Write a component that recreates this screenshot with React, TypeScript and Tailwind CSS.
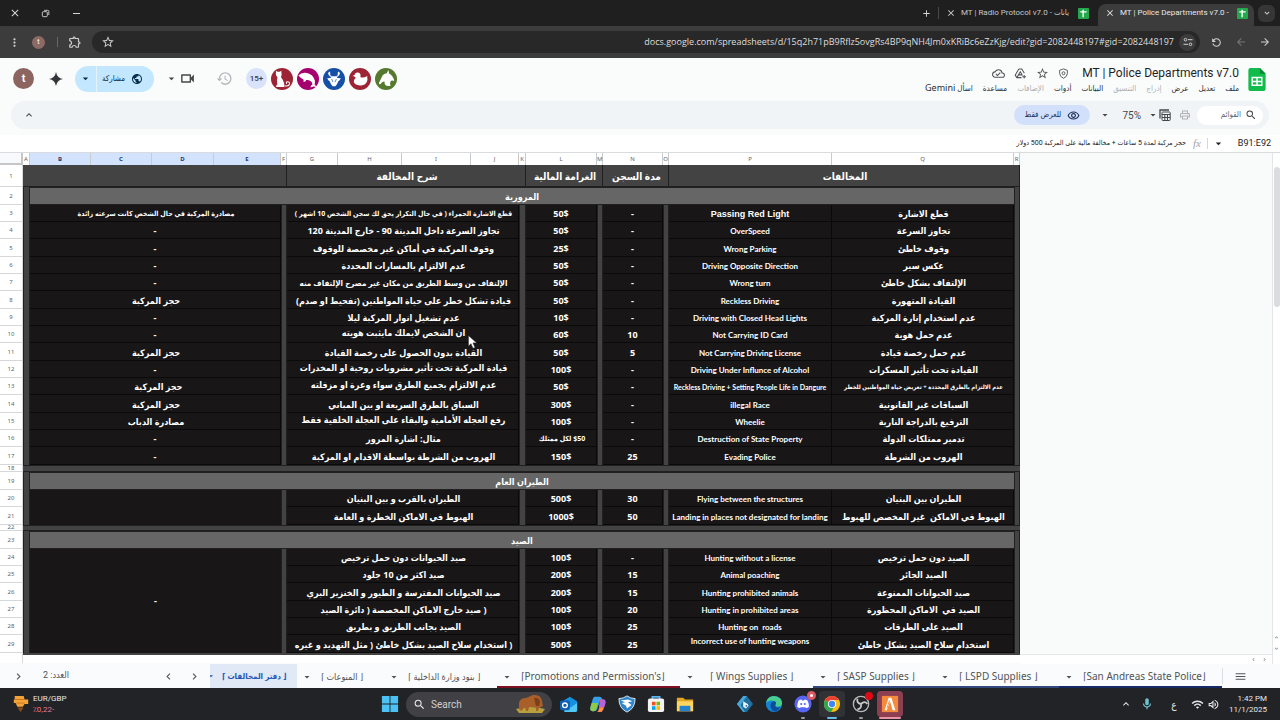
import type { ReactNode } from "react";
import {
  MdAdd,
  MdArrowBack,
  MdArrowDropDown,
  MdArrowForward,
  MdChevronLeft,
  MdChevronRight,
  MdClose,
  MdExpandLess,
  MdExpandMore,
  MdHistory,
  MdMenu,
  MdMoreVert,
  MdOutlineCloudDone,
  MdOutlineExtension,
  MdOutlineMic,
  MdOutlinePrint,
  MdOutlineRemoveRedEye,
  MdOutlineVideocam,
  MdOutlineVolumeUp,
  MdPublic,
  MdRefresh,
  MdSearch,
  MdStarBorder,
  MdWifi,
} from "react-icons/md";

type Row = {
  n: number;
  h: string;
  note?: string;
  desc: string;
  fine: string;
  jail: string;
  en: string;
  ar: string;
  // font size per field where it differs from the default
  size?: Record<string, string>;
  // fields anchored to the top of their cell
  top?: string[];
};

const H17 = "h-[17px]";
const H18 = "h-[18px]";

const TRAFFIC: Row[] = [
  { n: 3, h: H17, note: "مصادرة المركبة في حال الشخص كانت سرعته زائدة", desc: "قطع الاشارة الحمراء ( في حال التكرار يحق لك سجن الشخص 10 اشهر )", fine: "50$", jail: "-", en: "Passing Red Light", ar: "قطع الاشارة", size: { note: "text-[7px]", desc: "text-[7px]", en: "text-[9px]" } },
  { n: 4, h: H17, note: "-", desc: "تجاوز السرعة داخل المدينة 90 - خارج المدينة 120", fine: "50$", jail: "-", en: "OverSpeed", ar: "تجاوز السرعة" },
  { n: 5, h: H18, note: "-", desc: "وقوف المركبة في أماكن غير مخصصة للوقوف", fine: "25$", jail: "-", en: "Wrong Parking", ar: "وقوف خاطئ" },
  { n: 6, h: H17, note: "-", desc: "عدم الالتزام بالمسارات المحددة", fine: "50$", jail: "-", en: "Driving Opposite Direction", ar: "عكس سير" },
  { n: 7, h: H17, note: "-", desc: "الإلتفاف من وسط الطريق من مكان غير مصرح الإلتفاف منه", fine: "50$", jail: "-", en: "Wrong turn", ar: "الإلتفاف بشكل خاطئ", size: { desc: "text-[8px]" } },
  { n: 8, h: H18, note: "حجز المركبة", desc: "قيادة تشكل خطر على حياة المواطنين (تفحيط او صدم)", fine: "50$", jail: "-", en: "Reckless Driving", ar: "القيادة المتهورة" },
  { n: 9, h: H17, note: "-", desc: "عدم تشغيل انوار المركبة ليلا", fine: "10$", jail: "-", en: "Driving with Closed Head Lights", ar: "عدم استخدام إنارة المركبة" },
  { n: 10, h: H17, note: "-", desc: "ان الشخص لايملك مايثبت هويته", fine: "60$", jail: "10", en: "Not Carrying ID Card", ar: "عدم حمل هوية", top: ["desc"] },
  { n: 11, h: H18, note: "حجز المركبة", desc: "القيادة بدون الحصول على رخصة القيادة", fine: "50$", jail: "5", en: "Not Carrying Driving License", ar: "عدم حمل رخصة قيادة" },
  { n: 12, h: H17, note: "-", desc: "قيادة المركبة تحت تأثير مشروبات روحية او المخدرات", fine: "100$", jail: "-", en: "Driving Under Influnce of Alcohol", ar: "القيادة تحت تأثير المسكرات", top: ["desc"] },
  { n: 13, h: H17, note: "حجز المركبة  ", desc: "عدم الالتزام بجميع الطرق سواء وعرة او مزفلته", fine: "50$", jail: "-", en: "Reckless Driving + Setting People Life in Dangure", ar: "عدم الالتزام بالطرق المحددة + تعريض حياة المواطنين للخطر", size: { en: "text-[7px]", ar: "text-[6px]" }, top: ["desc"] },
  { n: 14, h: H18, note: "حجز المركبة", desc: "السباق بالطرق السريعة او بين المباني", fine: "300$", jail: "-", en: "illegal Race", ar: "السباقات غير القانونية" },
  { n: 15, h: H17, note: "مصادرة الدباب", desc: "رفع العجله الأمامية والبقاء على العجلة الخلفية فقط", fine: "100$", jail: "-", en: "Wheelie", ar: "الترفيع بالدراجة النارية", top: ["desc"] },
  { n: 16, h: H17, note: "-", desc: "مثال: اشارة المرور", fine: "$50 لكل ممتلك", jail: "-", en: "Destruction of State Property", ar: "تدمير ممتلكات الدولة", size: { fine: "text-[7px]" } },
  { n: 17, h: H18, note: "-", desc: "الهروب من الشرطة بواسطة الاقدام او المركبة", fine: "150$", jail: "25", en: "Evading Police", ar: "الهروب من الشرطة" },
];

const AVIATION: Row[] = [
  { n: 20, h: H17, desc: "الطيران بالقرب و بين البنيان", fine: "500$", jail: "30", en: "Flying between the structures", ar: "الطيران بين البنيان" },
  { n: 21, h: H18, desc: "الهبوط في الاماكن الخطرة و العامة", fine: "1000$", jail: "50", en: "Landing in places not designated for landing", ar: "الهبوط في الاماكن  غير المخصص للهبوط" },
];

const HUNTING: Row[] = [
  { n: 24, h: H17, desc: "صيد الحيوانات دون حمل ترخيص", fine: "100$", jail: "-", en: "Hunting without a license", ar: "الصيد دون حمل ترخيص" },
  { n: 25, h: H17, desc: "صيد اكثر من 10 جلود", fine: "200$", jail: "15", en: "Animal poaching", ar: "الصيد الجائر" },
  { n: 26, h: H18, desc: "صيد الحيوانات المفترسة و الطيور و الخنزير البري", fine: "200$", jail: "15", en: "Hunting prohibited animals", ar: "صيد الحيوانات الممنوعة" },
  { n: 27, h: H17, desc: "( صيد خارج الاماكن المخصصة ( دائرة الصيد", fine: "100$", jail: "20", en: "Hunting in prohibited areas", ar: "الصيد في  الاماكن المحظورة" },
  { n: 28, h: H17, desc: "الصيد بجانب الطريق و بطريق", fine: "100$", jail: "25", en: "Hunting on  roads", ar: "الصيد على الطرقات" },
  { n: 29, h: H18, desc: "( استخدام سلاح الصيد بشكل خاطئ ( مثل التهديد و غيره", fine: "500$", jail: "25", en: "Incorrect use of hunting weapons", ar: "استخدام سلاح الصيد بشكل خاطئ", top: ["en"] },
];

const COLUMNS = [
  { id: "A", w: "w-[7px]" },
  { id: "B", w: "w-[61px]" },
  { id: "C", w: "w-[61px]" },
  { id: "D", w: "w-[62px]" },
  { id: "E", w: "w-[67px]" },
  { id: "F", w: "w-[6px]" },
  { id: "G", w: "w-[51px]" },
  { id: "H", w: "w-[64px]" },
  { id: "I", w: "w-[69px]" },
  { id: "J", w: "w-[48px]" },
  { id: "K", w: "w-[7px]" },
  { id: "L", w: "w-[71px]" },
  { id: "M", w: "w-[6px]" },
  { id: "N", w: "w-[60px]" },
  { id: "O", w: "w-[6px]" },
  { id: "P", w: "w-[163px]" },
  { id: "Q", w: "w-[182px]" },
  { id: "R", w: "w-[6px]" },
];

const SELECTED = ["B", "C", "D", "E"];

const AR = "font-['Noto_Sans','DejaVu_Sans_Condensed','DejaVu_Sans',sans-serif]";

function RowNumber({ n }: { n: number }) {
  return (
    <th className="border-r border-b border-[#d5d7da] bg-white p-0 text-[6px] leading-none font-normal text-[#5f6368]">
      {n}
    </th>
  );
}

function Stripe() {
  return <td className="border-x border-[#202020] bg-[#434343] p-0" />;
}

function Cell({
  children,
  span = 1,
  size = "text-[9px]",
  top,
  font = "",
}: {
  children?: ReactNode;
  span?: number;
  size?: string;
  top?: boolean;
  font?: string;
}) {
  return (
    <td
      colSpan={span}
      dir="auto"
      className={`border-r border-b border-[#0a0a0a] bg-[#181617] px-0 pb-0 text-center font-bold whitespace-pre text-white ${size} ${font} ${
        top ? "pt-0 align-top leading-[13px]" : "pt-[2px] align-middle leading-[14px]"
      }`}
    >
      {children}
    </td>
  );
}

function SheetRow({ row, note }: { row: Row; note?: ReactNode }) {
  const top = (key: string) => row.top?.includes(key);
  // the first row is set in Arial, the others in a narrower face
  const latin = row.n === 3 ? "font-['Liberation_Sans',sans-serif]" : "font-['Lato',sans-serif]";
  return (
    <tr className={row.h}>
      <RowNumber n={row.n} />
      <Stripe />
      {note !== undefined ? (
        note
      ) : (
        <Cell span={4} size={row.size?.note}>
          {row.note}
        </Cell>
      )}
      <Stripe />
      <Cell span={4} size={row.size?.desc} top={top("desc")}>
        {row.desc}
      </Cell>
      <Stripe />
      <Cell size={row.size?.fine}>{row.fine}</Cell>
      <Stripe />
      <Cell>{row.jail}</Cell>
      <Stripe />
      <Cell size={row.size?.en ?? "text-[8px]"} top={top("en")} font={latin}>
        {row.en}
      </Cell>
      <Cell size={row.size?.ar}>{row.ar}</Cell>
      <Stripe />
    </tr>
  );
}

function SectionRow({ n, title, h }: { n: number; title: string; h: string }) {
  return (
    <tr className={h}>
      <RowNumber n={n} />
      <Stripe />
      <td
        colSpan={16}
        dir="rtl"
        className="border-y border-[#202020] bg-[#666666] p-0 text-center text-[9px] leading-[15px] font-bold text-white"
      >
        {title}
      </td>
      <Stripe />
    </tr>
  );
}

function GapRow({ n, h }: { n: number; h: string }) {
  return (
    <tr className={h}>
      <th className="border-r border-b border-[#d5d7da] bg-white p-0 text-[6px] leading-[5px] font-normal text-[#5f6368]">{n}</th>
      <td colSpan={18} className="border-y border-[#202020] bg-[#434343] p-0" />
    </tr>
  );
}

function Sheet() {
  const head = "border-r border-b border-[#202020] bg-[#434343] p-0 text-center text-[10px] leading-[18px] font-bold text-white";
  return (
    <table className={`w-[1020px] table-fixed border-separate border-spacing-0 self-start ${AR}`}>
      <colgroup>
        <col className="w-[23px]" />
        {COLUMNS.map((c) => (
          <col key={c.id} className={c.w} />
        ))}
      </colgroup>
      <thead>
        <tr className="h-[12px]">
          <th className="border-r-2 border-b-2 border-[#c4c7c5] bg-[#f8f9fa] p-0" />
          {COLUMNS.map((c) => (
            <th
              key={c.id}
              className={`border-r border-[#c9cccf] p-0 text-center text-[6px] leading-[10px] ${
                SELECTED.includes(c.id) ? "bg-[#d3e3fd] font-bold text-[#1f3a6b]" : "bg-white font-normal text-[#5f6368]"
              }`}
            >
              {c.id}
            </th>
          ))}
        </tr>
      </thead>
      <tbody>
        <tr className="h-[22px]">
          <RowNumber n={1} />
          <td colSpan={6} className={head} />
          <td colSpan={5} dir="rtl" className={head}>شرح المخالفة</td>
          <td colSpan={2} dir="rtl" className={head}>الغرامة المالية</td>
          <td colSpan={2} dir="rtl" className={head}>مدة السجن</td>
          <td colSpan={3} dir="rtl" className={head}>المخالفات</td>
        </tr>
        <SectionRow n={2} title="المرورية" h={H18} />
        {TRAFFIC.map((row) => (
          <SheetRow key={row.n} row={row} />
        ))}
        <GapRow n={18} h="h-[7px]" />
        <SectionRow n={19} title="الطيران العام" h={H18} />
        {AVIATION.map((row, i) => (
          <SheetRow
            key={row.n}
            row={row}
            note={i === 0 ? <td colSpan={4} rowSpan={2} className="bg-[#181617] p-0" /> : null}
          />
        ))}
        <GapRow n={22} h="h-[6px]" />
        <SectionRow n={23} title="الصيد" h={H18} />
        {HUNTING.map((row, i) => (
          <SheetRow
            key={row.n}
            row={row}
            note={
              i === 0 ? (
                <td colSpan={4} rowSpan={6} className="bg-[#181617] p-0 text-center text-[9px] font-bold text-white">-</td>
              ) : null
            }
          />
        ))}
        <tr className="h-[10px]">
          <td className="border-r border-[#d5d7da] bg-white p-0" />
          <td colSpan={18} className="border-t-2 border-[#434343] bg-white p-0" />
        </tr>
      </tbody>
    </table>
  );
}

function SheetsIcon() {
  return (
    <svg viewBox="0 0 12 12" className="size-[11px] shrink-0">
      <rect width="12" height="12" rx="1" fill="#23a84c" />
      <path d="M2.5 4.2h7M5.6 2v8" stroke="#fff" strokeWidth="1.5" />
    </svg>
  );
}

function BrowserTabs() {
  return (
    <div className="flex h-[26px] items-center bg-[#1f1f1f] text-[#d6d6d6]">
      <button aria-label="Close window" className="flex w-[29px] justify-center"><MdClose size={12} /></button>
      <button aria-label="Restore window" className="flex w-[32px] justify-center">
        <svg viewBox="0 0 10 10" className="size-[9px]" fill="none" stroke="currentColor">
          <rect x="1.500" y="3" width="5.500" height="5.500" rx="1" />
          <path d="M3.500 1.500h4q1.200 0 1.200 1.200v4" />
        </svg>
      </button>
      <button aria-label="Minimize window" className="flex w-[30px] justify-center"><span className="h-px w-[7px] bg-[#d6d6d6]" /></button>
      <div className="flex-1" />
      <button aria-label="New tab" className="flex w-[24px] justify-center"><MdAdd size={11} /></button>
      <div className="h-3 w-px bg-[#4a4a4a]" />
      <div className="flex h-full w-[159px] items-center pl-[7px]">
        <button aria-label="Close tab" className="mr-[5px]"><MdClose size={10} /></button>
        <span dir="ltr" className="w-[112px] text-[8px] whitespace-nowrap text-[#c7c7c7]">MT | Radio Protocol v7.0 - يانات</span>
        <span className="ml-[5px]"><SheetsIcon /></span>
      </div>
      <div className="mt-1 flex h-[22px] w-[156px] items-center rounded-t-lg bg-[#3c3c3c] pb-1 pl-[7px] text-[#e8e8e8]">
        <button aria-label="Close tab" className="mr-[5px]"><MdClose size={10} /></button>
        <span className="w-[112px] text-[8px] whitespace-nowrap">MT | Police Departments v7.0 -</span>
        <span className="ml-[5px]"><SheetsIcon /></span>
      </div>
      <button aria-label="Search tabs" className="mr-[5px] ml-1 flex size-[17px] items-center justify-center rounded-md bg-[#363636]">
        <MdExpandMore size={10} />
      </button>
    </div>
  );
}

function AddressBar() {
  return (
    <div className="flex h-[32px] items-center bg-[#3c3c3c] text-[#d0d0d0]">
      <button aria-label="Browser menu" className="flex w-[29px] justify-center"><MdMoreVert size={13} /></button>
      <button className="ml-[3px] size-[13px] rounded-full bg-[#8d6a66] text-[7px] leading-[13px] text-white">t</button>
      <div className="ml-[12px] h-[10px] w-px bg-[#666]" />
      <button aria-label="Extensions" className="ml-[10px]"><MdOutlineExtension size={14} /></button>
      <div className="ml-[10px] flex h-[22px] flex-1 items-center rounded-full bg-[#282828] pr-1 pl-[9px]">
        <button aria-label="Bookmark"><MdStarBorder size={14} /></button>
        <input
          aria-label="Address"
          readOnly
          className="min-w-0 flex-1 bg-transparent pr-[5px] text-right font-['Open_Sans','Liberation_Sans',sans-serif] text-[9px] text-[#dedede] outline-none"
          value="docs.google.com/spreadsheets/d/15q2h71pB9Rflz5ovgRs4BP9qNH4Jm0xKRiBc6eZzKjg/edit?gid=2082448197#gid=2082448197"
        />
        <button aria-label="Site settings" className="flex size-[17px] items-center justify-center rounded-full bg-[#3c3c3c]">
          <svg viewBox="0 0 10 10" className="size-[10px]" fill="none" stroke="currentColor">
            <circle cx="2.500" cy="2.700" r="1.300" />
            <circle cx="7.500" cy="7.300" r="1.300" />
            <path d="M5 2.700h4.500M.5 7.300H5" />
          </svg>
        </button>
      </div>
      <button aria-label="Reload" className="ml-[10px]"><MdRefresh size={13} className="-scale-x-100" /></button>
      <button aria-label="Forward" className="ml-[12px] text-[#777]"><MdArrowBack size={12} /></button>
      <button aria-label="Back" className="mr-[9px] ml-[12px]"><MdArrowForward size={12} /></button>
    </div>
  );
}

const ANIMALS = [
  {
    name: "Anonymous Cat",
    bg: "fill-[#9c2435]",
    art: (
      <>
        <path d="M-17-24l4 3h6l5-3 1 12q-3 5-1 8 6 6 8 16l1 6q2 4-1 5h-22q-3-2 0-5 4-2 2-6-2-10 1-17-5-4-5-10z" fill="#fff" />
        <path d="M9 20q11 2 13-6 0-7-7-6-4 2-1 6" fill="none" stroke="#fff" strokeWidth="3" />
      </>
    ),
  },
  {
    name: "Anonymous Dolphin",
    bg: "fill-[#a6006f]",
    art: <path d="M-28-10q8-9 20-8 22 2 28 22 1 8-1 12 5 3 4 8-4-3-8-2-4 3-8 2 1-6 6-8 0-8-8-12-6-2-10-1-2 6-8 6 1-5-1-8-8-4-14-11z" fill="#fff" />,
  },
  {
    name: "Anonymous Kraken",
    bg: "fill-[#174ea6]",
    art: (
      <>
        <path d="M-20-2l10-1 3-5H7l3 5 10 1-5 7-3 2q-2 8-8 14h-8q-6-6-8-14l-3-2z" fill="#fff" />
        <path d="M-7-7q-8-2-9-12M-12-12l-1-9M7-7q8-2 9-12M12-12l1-9" fill="none" stroke="#fff" strokeWidth="3" />
        <path d="M-7 0L-3 9M7 0L3 9" fill="none" stroke="#174ea6" strokeWidth="2" />
      </>
    ),
  },
  {
    name: "Anonymous Duck",
    bg: "fill-[#9c2435]",
    art: <path d="M-22-9l6-3q2-8 10-7 10 2 7 13 8 5 20-3 4 24-14 27-20 3-25-9-1-8 6-13-4-1-5-4z" fill="#fff" />,
  },
  {
    name: "Anonymous Horse",
    bg: "fill-[#567a2d]",
    art: <path d="M-20 10l10-20q4-6 12-7l5-9 2 10q12 6 15 22-6-3-10 0-4 4-1 14-12 2-16-4-2-5-1-9-5 0-9 4-2 5-6 4-3-1-1-5z" fill="#fff" />,
  },
];

function DocHeader() {
  return (
    <header className="flex h-[43px] items-center bg-[#fafcfc] pb-[2px] text-[#444746]">
      <button aria-label="Account" className="ml-[13px] size-[21px] rounded-full bg-[#8d6560] text-[11px] leading-[20px] font-bold text-white">t</button>
      <button aria-label="Gemini" className="ml-[15px]">
        <svg viewBox="0 0 14 14" className="size-[14px]"><path d="M7 0q1 6 7 7-6 1-7 7-1-6-7-7 6-1 7-7z" fill="#333638" /></svg>
      </button>
      <div className="ml-[12px] flex h-[26px] w-[79px] items-center rounded-full bg-[#c2e7ff] text-[#062e4b]">
        <button aria-label="Share options" className="flex h-full w-[22px] items-center justify-center border-r border-[#e3f3ff]"><MdArrowDropDown size={13} /></button>
        <button className="flex flex-1 items-center justify-center gap-[6px] pr-[6px] text-[8px]"><span dir="rtl">مشاركة</span><MdPublic size={12} /></button>
      </div>
      <button className="ml-[11px] flex items-center"><MdArrowDropDown size={13} /><MdOutlineVideocam size={17} className="ml-[1px]" /></button>
      <button aria-label="Version history" className="ml-[20px] text-[#b4b8bb]"><MdHistory size={17} /></button>
      <div className="ml-[13px] flex items-center gap-[4px]">
        <span className="size-[21px] rounded-full bg-[#d8e2fb] text-center text-[8px] leading-[21px] font-medium text-[#333c55]">15+</span>
        {ANIMALS.map((a) => (
          <svg key={a.name} viewBox="-32 -32 64 64" className="size-[22px]" role="img" aria-label={a.name}>
            <circle r="32" className={a.bg} />
            {a.art}
          </svg>
        ))}
      </div>
      <div className="flex-1" />
      <div className="flex flex-col items-end pt-[3px]">
        <div className="flex items-center gap-[9px] text-[#505355]">
          <MdOutlineCloudDone size={13} />
          <svg viewBox="0 0 14 12" className="h-[11px] w-[13px]" fill="none" stroke="currentColor" strokeWidth="1.100">
            <path d="M5.200 1h3.200l2.800 4.800M8 10.500H3L1.200 7.800 5.200 1M3 10.500L6.800 4l2 3.500H5" />
            <path d="M11 7.500v4M9 9.500h4" />
          </svg>
          <MdStarBorder size={13} />
          <svg viewBox="0 0 12 12" className="size-[11px]" fill="none" stroke="currentColor">
            <path d="M6 1l4.200 1.500v3.700q-.3 3.400-4.200 5-3.900-1.600-4.200-5V2.500z" />
            <circle cx="6" cy="5.700" r="1.600" />
          </svg>
          <h1 className="ml-[4px] text-[12px] leading-[16px] text-[#1f1f1f]">MT | Police Departments v7.0</h1>
        </div>
        <nav dir="rtl" className={`flex gap-[10px] text-[8px] leading-[14px] text-[#2c2e30] ${AR}`}>
          <button>ملف</button>
          <button>تعديل</button>
          <button>عرض</button>
          <button className="text-[#adb0b3]">إدراج</button>
          <button className="text-[#adb0b3]">التنسيق</button>
          <button>البيانات</button>
          <button>أدوات</button>
          <button className="text-[#adb0b3]">الإضافات</button>
          <button>مساعدة</button>
          <button>اسأل <span className="text-[9px]">Gemini</span></button>
        </nav>
      </div>
      <svg viewBox="0 0 18 24" className="mr-[14px] ml-[9px] mt-[2px] h-[23px] w-[18px]">
        <path d="M2 0h10l6 6v16q0 2-2 2H2q-2 0-2-2V2q0-2 2-2z" fill="#11bc4b" />
        <path d="M12 0l6 6h-6z" fill="#0a8838" />
        <path d="M4 10h10v8H4zM4 14h10M9 10v8" fill="none" stroke="#fff" strokeWidth="1.500" />
      </svg>
    </header>
  );
}

function Toolbar() {
  return (
    <div className="bg-[#fafcfc] px-[11px] pb-[6px]">
      <div className="flex h-[28px] items-center rounded-full bg-[#f0f4f7] text-[#444746]">
        <button aria-label="Hide menus" className="ml-[12px]"><MdExpandLess size={12} /></button>
        <div className="flex-1" />
        <button className="flex h-[20px] w-[76px] items-center justify-center gap-[6px] rounded-full bg-[#d3e0fb] text-[8px] text-[#1b3055]">
          <span dir="rtl">للعرض فقط</span>
          <MdOutlineRemoveRedEye size={13} />
        </button>
        <button className="ml-[9px] flex items-center text-[10px]"><MdArrowDropDown size={12} className="mr-[11px]" />75%</button>
        <button aria-label="Filter views" className="ml-[6px] flex items-center">
          <MdArrowDropDown size={12} />
          <svg viewBox="0 0 12 12" className="size-[12px]" fill="none" stroke="currentColor">
            <path d="M1 9.500V1h9" strokeWidth="1.300" />
            <rect x="3" y="3" width="8.200" height="8.500" rx=".8" />
            <path d="M3 5.500h8.200M3 8.500h8.200M5.800 5.500v6M8.500 5.500v6" />
          </svg>
        </button>
        <button aria-label="Print" className="ml-[8px] text-[#b0b4b7]"><MdOutlinePrint size={12} /></button>
        <label className="mr-[6px] ml-[6px] flex h-[19px] w-[66px] items-center rounded-full bg-white pr-[6px]">
          <input dir="rtl" aria-label="القوائم" placeholder="القوائم" className="w-[44px] bg-transparent text-[8px] outline-none placeholder:text-[#62666a]" />
          <MdSearch size={12} className="ml-auto" />
        </label>
      </div>
    </div>
  );
}

function FormulaBar() {
  return (
    <div className="flex h-[18px] items-center justify-end border-b border-[#d9dcdf] bg-white pr-[9px] text-[#202124]">
      <span dir="rtl" className="text-[7px]">حجز مركبة لمدة 5 ساعات + مخالفة مالية على المركبة 500 دولار</span>
      <span className="ml-[7px] font-['Liberation_Serif',serif] text-[11px] text-[#a0a4a8] italic">fx</span>
      <div className="ml-[6px] h-[11px] w-px bg-[#d5d8db]" />
      <MdArrowDropDown size={13} className="ml-[4px]" />
      <span className="ml-[13px] text-[9px]">B91:E92</span>
    </div>
  );
}

const SHEET_TABS = [
  { label: "⌈ المنوعات ⌋", w: "w-[87px]", line: "border-transparent", style: "gap-[8px] text-[9px]" },
  { label: "⌈ بنود وزارة الداخلية ⌋", w: "w-[113px]", line: "border-transparent", style: "gap-[8px] text-[9px]" },
  { label: "⌈Promotions and Permission's⌋", w: "w-[183px]", line: "border-[#7d1022]", style: "gap-[8px] text-[10px]" },
  { label: "⌈ Wings Supplies ⌋", w: "w-[133px]", line: "border-transparent", style: "gap-[14px] text-[10px]" },
  { label: "⌈ SASP Supplies ⌋", w: "w-[122px]", line: "border-[#33487c]", style: "gap-[8px] text-[10px]" },
  { label: "⌈ LSPD Supplies ⌋", w: "w-[124px]", line: "border-[#33487c]", style: "gap-[8px] text-[10px]" },
  { label: "⌈San Andreas State Police⌋", w: "w-[163px]", line: "border-[#162a63]", style: "gap-[8px] text-[10px]" },
];

function SheetTabs() {
  return (
    <div className="flex h-[24px] items-center bg-[#fafbfc] text-[#505458]">
      <button aria-label="Side panel" className="flex w-[36px] justify-center"><MdChevronRight size={13} /></button>
      <span dir="rtl" className="w-[40px] text-center text-[9px]">العدد: 2</span>
      <div className="w-[86px]" />
      <button aria-label="Scroll tabs left" className="w-[26px]"><MdChevronLeft size={13} /></button>
      <button aria-label="Scroll tabs right" className="w-[22px]"><MdChevronRight size={13} /></button>
      <button className={`flex h-full w-[87px] items-center gap-[6px] overflow-hidden bg-[#e1e9f7] text-[8px] font-bold whitespace-nowrap text-[#2557b5] ${AR}`}>
        <MdArrowDropDown size={10} className="-ml-[4px] shrink-0" />
        ⌈ دفتر المخالفات ⌋
      </button>
      {SHEET_TABS.map((t) => (
        <button key={t.label} className={`flex h-full items-center border-b-2 pt-[3px] pl-[4px] whitespace-nowrap ${t.w} ${t.line} ${t.style} ${AR}`}>
          <MdArrowDropDown size={12} className="shrink-0" />
          {t.label}
        </button>
      ))}
      <div className="h-[16px] w-px bg-[#dcdfe2]" />
      <div className="flex-1" />
      <button aria-label="All sheets" className="mr-[33px]"><MdMenu size={13} /></button>
    </div>
  );
}

function TaskIcon({ label, children, active }: { label: string; children: ReactNode; active?: string }) {
  return (
    <button aria-label={label} className={`flex size-[26px] shrink-0 flex-col items-center justify-center rounded ${active ?? ""}`}>
      <svg viewBox="0 0 20 20" className="size-[18px]">{children}</svg>
    </button>
  );
}

function Taskbar() {
  return (
    <footer className="flex h-[32px] items-center bg-[#222326] text-[#e8e8e8]">
      <svg viewBox="0 0 18 20" className="ml-[12px] size-[18px]">
        <path d="M2 1h10l1 4h4v5h-4l-2 3H5L3 9H1V5h1z" fill="#f2a33a" />
        <path d="M2 5h11M4 9h9" stroke="#c9741b" />
        <path d="M5 14h7l-3.500 5z" fill="#8a4a1c" />
      </svg>
      <div className="ml-[3px] w-[60px] text-[8px] leading-[11px]">
        <div>EUR/GBP</div>
        <div className="text-[#e07a9c]">٪0,22-</div>
      </div>
      <div className="flex-1" />
      <div className="flex items-center gap-[3px] pl-[67px]">
        <TaskIcon label="Start">
          <path d="M1 1h8.500v8.500H1zM10.500 1H19v8.500h-8.500zM1 10.500h8.500V19H1zM10.500 10.500H19V19h-8.500z" fill="#4cc2f4" />
        </TaskIcon>
        <label className="mr-[1px] flex h-[25px] w-[146px] items-center rounded-full bg-[#414145] pl-[7px]">
          <MdSearch size={13} />
          <input placeholder="Search" aria-label="Search" className="ml-[5px] w-[80px] bg-transparent text-[10px] outline-none placeholder:text-[#cfcfcf]" />
          <svg viewBox="0 0 30 20" className="ml-[5px] h-[20px] w-[30px]">
            <path d="M0 15q14-4 29 0l-3 4H3z" fill="#b7a13d" />
            <path d="M3 15V9q1-5 7-5l7-3q8-1 9 6l1 5-4 2-1 3h-2v-4h-7l-1 4h-2l-1-4-4 4z" fill="#a85f2a" />
            <path d="M18 4q5-1 6 4l-1 4h-3z" fill="#7c3f1a" />
          </svg>
        </label>
        <TaskIcon label="Outlook">
          <path d="M4 6l7-4 8 5v10q0 2-2 2H5z" fill="#1490df" />
          <path d="M5 10l7 4 7-5v8q0 2-2 2H5z" fill="#50c8f5" />
          <rect y="6" width="11" height="11" rx="2" fill="#0f5eb5" />
          <circle cx="5.500" cy="11.500" r="2.600" fill="none" stroke="#fff" strokeWidth="1.500" />
        </TaskIcon>
        <TaskIcon label="Copilot">
          <path d="M6 2h6q2 0 3 3l-3 2-3 9q-1 2-3 2H4q-4 0-2-6l2-7q1-3 2-3z" fill="#35a0e8" />
          <path d="M3 9h7l-2 7q-1 2-3 2H4q-4 0-2-6z" fill="#8fca4a" />
          <path d="M12 5h4q3 0 2 5l-2 6q-1 3-4 3H8q2 0 3-4z" fill="#e3599c" />
          <path d="M14 5h2q3 0 2 5l-1 3h-6z" fill="#b064e0" />
          <path d="M10 19l2-5h4l-1 3q-1 2-3 2z" fill="#f49a2f" />
        </TaskIcon>
        <TaskIcon label="Shield">
          <path d="M1 4q5 0 9-3 4 3 9 3 0 11-9 15Q1 15 1 4z" fill="#2f86c8" stroke="#e6f1fa" />
          <path d="M3 6l8-1 5 2-5 1 4 3-5 4-1-3-5-3 4-1z" fill="#fff" />
        </TaskIcon>
        <TaskIcon label="Store">
          <path d="M6 5V2h8v3" fill="none" stroke="#5bb7ef" strokeWidth="2" />
          <rect x="1" y="4" width="18" height="15" rx="2" fill="#f3f3f3" />
          <path d="M5.500 7.500h4v4h-4z" fill="#f25022" />
          <path d="M10.500 7.500h4v4h-4z" fill="#7fba00" />
          <path d="M5.500 12.500h4v4h-4z" fill="#00a4ef" />
          <path d="M10.500 12.500h4v4h-4z" fill="#ffb900" />
        </TaskIcon>
        <TaskIcon label="File Explorer">
          <path d="M1 3h7l2 2h9v13H1z" fill="#e5a520" />
          <path d="M1 7h18v11H1z" fill="#ffd562" />
          <path d="M4 12h12v6H4z" fill="#2681cf" />
        </TaskIcon>
        <div className="w-[28px]" />
        <TaskIcon label="Launcher">
          <path d="M8 1h4l7 9-7 9H8l-7-9z" fill="#1f6f9f" />
          <path d="M8 1h4L8 7l-3 4 5 8H8l-7-9z" fill="#4aa8d6" />
          <path d="M8 7l5 3 1 2-3 3-3-2z" fill="#e8f8ff" />
          <circle cx="11.500" cy="12" r="1" fill="#1f5f8c" />
        </TaskIcon>
        <TaskIcon label="Edge">
          <circle cx="10" cy="10" r="9" fill="#1583d4" />
          <path d="M1 9q2-8 9-8 9 1 9 8 0 4-5 4-4 0-2-3 0-4-5-4-4 0-6 3z" fill="#48cf8f" />
          <path d="M6 11q1-4 5-4 2 1 1 3-2 3 2 4l3-1q-3 6-7 5-4-2-4-7z" fill="#0d4e9c" />
        </TaskIcon>
        <span className="relative flex">
          <TaskIcon label="Discord">
            <circle cx="10" cy="10" r="9.500" fill="#5865f2" />
            <path d="M5 6q2-1 3-1l1 1h2l1-1q1 0 3 1 2 4 1.500 7-1.500 1.500-3 1.500l-1-1h-5l-1 1q-1.500 0-3-1.500Q3.500 10 5 6z" fill="#fff" />
            <circle cx="8" cy="10" r="1.200" fill="#5865f2" />
            <circle cx="12" cy="10" r="1.200" fill="#5865f2" />
          </TaskIcon>
          <span className="absolute top-0 right-0 size-[9px] rounded-full border-3 border-[#d85a66] bg-white" />
          <span className="absolute bottom-[-2px] left-[11px] h-[2px] w-[4px] rounded bg-[#9a9a9a]" />
        </span>
        <span className="relative flex">
          <TaskIcon label="Chrome" active="bg-[#313236]">
            <circle cx="10" cy="10" r="9" fill="#fbbf12" />
            <path d="M10 10L2.200 5.500A9 9 0 0 1 17.800 5.500H10z" fill="#e94235" />
            <path d="M10 10L2.200 5.500A9 9 0 0 0 9 19l4-7z" fill="#34a353" />
            <circle cx="10" cy="10" r="4.500" fill="#fff" />
            <circle cx="10" cy="10" r="3.500" fill="#4285f4" />
          </TaskIcon>
          <span className="absolute bottom-[-2px] left-[8px] h-[2px] w-[10px] rounded bg-[#63bfe8]" />
        </span>
        <span className="relative flex">
          <TaskIcon label="OBS Studio">
            <circle cx="10" cy="10" r="8.500" fill="#202124" stroke="#b9b9b9" strokeWidth="1.500" />
            <path d="M10 10q-5-1-4-6M10 10q4-4 7 0M10 10q1 5-4 6" fill="none" stroke="#c9c9c9" strokeWidth="2" />
          </TaskIcon>
          <span className="absolute top-[1px] right-[1px] size-[8px] rounded-full bg-[#e00914]" />
          <span className="absolute bottom-[-2px] left-[11px] h-[2px] w-[4px] rounded bg-[#9a9a9a]" />
        </span>
        <span className="relative flex">
          <TaskIcon label="FiveM" active="bg-[#8c3f51]">
            <rect x="1" y="1" width="18" height="18" fill="#f48a3c" />
            <path d="M8.500 3h3l4.500 14h-3L10 7 7 17H4z" fill="#fff" />
            <path d="M9 12l-2 5M9.500 6l-3 9" stroke="#f48a3c" />
          </TaskIcon>
          <span className="absolute bottom-[-2px] left-[2px] h-[2px] w-[22px] rounded bg-[#e993a8]" />
        </span>
      </div>
      <div className="flex-1" />
      <div className="flex w-[160px] items-center pr-[13px]">
        <MdExpandLess size={12} />
        <MdOutlineMic size={14} className="ml-[8px] text-[#6fc3ce]" />
        <span className="ml-[15px] w-[10px] text-center text-[10px]">ع</span>
        <MdWifi size={13} className="ml-[12px]" />
        <MdOutlineVolumeUp size={13} className="ml-[3px]" />
        <div className="ml-auto text-right text-[8px] leading-[11px] whitespace-nowrap">
          <div>1:42 PM</div>
          <div>11/1/2025</div>
        </div>
      </div>
    </footer>
  );
}

export default function App() {
  return (
    <div className="flex min-h-screen flex-col bg-[#fafcfc] font-['Roboto','DejaVu_Sans_Condensed','DejaVu_Sans',sans-serif]">
      <BrowserTabs />
      <AddressBar />
      <DocHeader />
      <Toolbar />
      <FormulaBar />
      <main className="relative flex flex-1 bg-[#f9fbfa]">
        <Sheet />
        <div className="flex flex-1 flex-col justify-end">
          <div className="flex h-[10px] items-center justify-end gap-[4px] border-t border-[#e6e8ea] bg-white pr-1 text-[#80868b]">
            <MdChevronLeft size={7} />
            <MdChevronRight size={7} />
          </div>
        </div>
        <div className="flex w-[8px] flex-col items-center border-l border-[#e3e5e8] bg-white pt-[14px] pb-[12px] text-[#80868b]">
          <div className="h-[140px] w-[6px] rounded-full bg-[#dadce0]" />
          <MdExpandLess size={7} className="mt-auto" />
          <MdExpandMore size={7} className="mt-[4px]" />
        </div>
        <svg viewBox="0 0 12 18" className="absolute top-[182px] left-[468px] h-[15px] w-[10px]">
          <path d="M.5.500v13l3-3 2.500 5.500 2.500-1-2.500-5.500h4.500z" fill="#fff" stroke="#222" strokeWidth=".7" />
        </svg>
      </main>
      <SheetTabs />
      <Taskbar />
    </div>
  );
}
